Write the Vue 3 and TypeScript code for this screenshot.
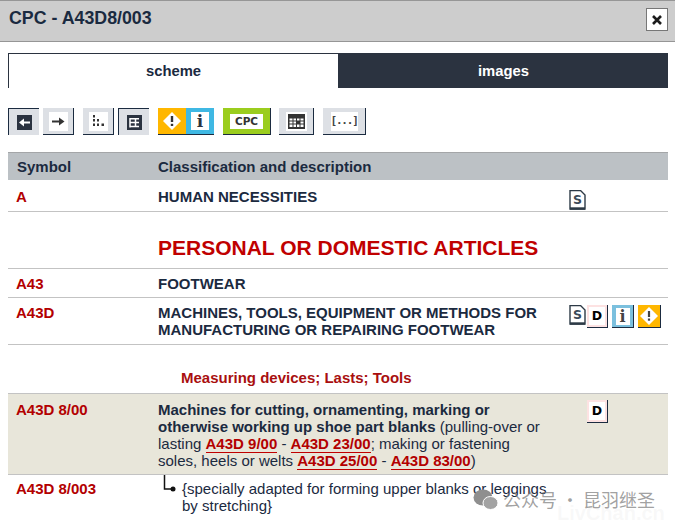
<script setup lang="ts">
const docPath = "M1 0.500h10.500l4.500 4.500v14H1z"
</script>

<template>
  <div class="page">
    <header class="head">
      <h1 class="title">CPC - A43D8/003</h1>
      <button class="close" aria-label="close">
        <svg width="12" height="12" viewBox="0 0 12 12"><path d="M2 2l8 8M10 2l-8 8" stroke="#1c1c1c" stroke-width="2.600" /></svg>
      </button>
    </header>

    <div class="main">
      <nav class="tabs">
        <div class="tab on">scheme</div>
        <div class="tab off">images</div>
      </nav>

      <div class="tools">
        <span class="tb pressed"><span class="ic dark"><svg width="15" height="15" viewBox="0 0 15 15"><path d="M4 7.500h9" stroke="#fff" stroke-width="2" /><path d="M2 7.500l5-4v8z" fill="#fff" /></svg></span></span>
        <span class="tb m4"><span class="ic white"><svg width="15" height="15" viewBox="0 0 15 15"><path d="M1 7.500h9" stroke="#333" stroke-width="2" /><path d="M8 3.500l5.500 4-5.500 4z" fill="#333" /></svg></span></span>
        <span class="tb m9"><span class="ic white"><svg width="15" height="15" viewBox="0 0 15 15"><path d="M2 1h2v2.500H2zM2 5h2v2.500H2zM2 9.500h2V12H2zM6 5h2v2.500H6zM6 9.500h2V12H6zM10.500 9.500h2.500V12h-2.500z" fill="#333" /></svg></span></span>
        <span class="tb pressed m4"><span class="ic dark"><svg width="15" height="15" viewBox="0 0 15 15"><path d="M3 3v9.500M3 3.800h9M3 7.500h9M3 11.500h9M8.500 3.800v7.700" stroke="#fff" stroke-width="1.500" fill="none" /></svg></span></span>
        <span class="duo m9">
          <span class="half amber"><svg width="18" height="18" viewBox="0 0 18 18"><path d="M9 0l9 9-9 9-9-9z" fill="#fff" /><path d="M9 4v6" stroke="#333" stroke-width="2.400" /><path d="M7.800 11.800h2.400v2.200H7.800z" fill="#333" /></svg></span>
          <span class="half blue"><span class="info">i</span></span>
        </span>
        <span class="cpc m9"><span class="cpc-in">CPC</span></span>
        <span class="tb wide m8"><span class="ic white"><svg width="17" height="15" viewBox="0 0 17 15"><path d="M0 0h17v15H0z" fill="#333" /><path d="M1.500 4.500h3v2h-3zM5.500 4.500h2.500v2H5.500zM9 4.500h2.500v2H9zM12.500 4.500h3v2h-3zM1.500 7.500h3v2h-3zM5.500 7.500h2.500v2H5.500zM12.500 7.500h3v2h-3zM1.500 10.500h3v2.500h-3zM5.500 10.500h2.500v2.500H5.500zM9 10.500h2.500v2.500H9zM12.500 10.500h3v2.500h-3z" fill="#fff" /></svg></span></span>
        <span class="tb wide2 m9"><span class="dots">[...]</span></span>
      </div>

      <div class="row thead">
        <div class="sym">Symbol</div>
        <div class="desc">Classification and description</div>
      </div>

      <div class="row r1">
        <div class="sym red">A</div>
        <div class="desc b">HUMAN NECESSITIES</div>
        <div class="acts">
          <span class="doc"><svg width="17" height="20" viewBox="0 0 17 20"><path :d="docPath" fill="#fff" stroke="#2d3a46" stroke-width="1.400" /><path d="M1 18.500h15" stroke="#2d3a46" stroke-width="2.400" /></svg><span class="doc-s">S</span></span>
        </div>
      </div>

      <div class="row r2">
        <div class="big">PERSONAL OR DOMESTIC ARTICLES</div>
      </div>

      <div class="row r3">
        <div class="sym red">A43</div>
        <div class="desc b">FOOTWEAR</div>
      </div>

      <div class="row r4">
        <div class="sym red">A43D</div>
        <div class="desc b">MACHINES, TOOLS, EQUIPMENT OR METHODS FOR MANUFACTURING OR REPAIRING FOOTWEAR</div>
        <div class="acts">
          <span class="doc"><svg width="17" height="20" viewBox="0 0 17 20"><path :d="docPath" fill="#fff" stroke="#2d3a46" stroke-width="1.400" /><path d="M1 18.500h15" stroke="#2d3a46" stroke-width="2.400" /></svg><span class="doc-s">S</span></span>
          <span class="d pink">D</span>
          <span class="mini-i"><span class="info small">i</span></span>
          <span class="mini-w"><svg width="18" height="18" viewBox="0 0 18 18"><path d="M9 0l9 9-9 9-9-9z" fill="#fff" /><path d="M9 4v6" stroke="#444" stroke-width="2.200" /><path d="M7.900 11.500h2.200v2.200H7.900z" fill="#444" /></svg></span>
        </div>
      </div>

      <div class="row r5">
        <div class="subh">Measuring devices; Lasts; Tools</div>
      </div>

      <div class="row r6">
        <div class="sym red">A43D 8/00</div>
        <div class="desc nar">
          <b>Machines for cutting, ornamenting, marking or otherwise working up shoe part blanks</b>
          (pulling-over or lasting <a class="lnk">A43D 9/00</a> - <a class="lnk">A43D 23/00</a>; making or fastening soles, heels or welts <a class="lnk">A43D 25/00</a> - <a class="lnk">A43D 83/00</a>)
        </div>
        <div class="acts center"><span class="d">D</span></div>
      </div>

      <div class="row r7">
        <div class="sym red">A43D 8/003</div>
        <div class="tree">
          <svg class="elbow" width="16" height="18" viewBox="0 0 16 18"><path d="M1.500 0v14h8" stroke="#111" stroke-width="1.500" fill="none" /><circle cx="10" cy="14" r="2.500" fill="#111" /></svg>
          <div class="leaf">{specially adapted for forming upper blanks or leggings by stretching}</div>
        </div>
      </div>
    </div>

    <div class="faint">LivChan.cn</div>
    <div class="mark">
      <svg width="25" height="21" viewBox="0 0 25 21"><ellipse cx="10" cy="8.500" rx="9.500" ry="8" fill="#8f8f8f" /><ellipse cx="17.500" cy="14" rx="7.500" ry="6.500" fill="#a3a3a3" stroke="#fff" stroke-width="1" /></svg>
      <span>公众号 · 昆羽继圣</span>
    </div>
  </div>
</template>

<style>
html, body { margin: 0; background: #fff; }
</style>

<style scoped>
.page {
  position: relative;
  width: 675px;
  height: 526px;
  overflow: hidden;
  background: #fff;
  font-family: "Liberation Sans", Arial, sans-serif;
  font-size: 15px;
  line-height: 17px;
  color: #1b2a3f;
}
.head {
  height: 40px;
  background: #cdcdcd;
  border-top: 1px solid #969696;
  border-bottom: 1px solid #969696;
  display: flex;
  align-items: flex-start;
  justify-content: space-between;
  padding: 0 7px 0 9px;
}
.title {
  margin: 7px 0 0;
  font-size: 17.800px;
  line-height: 20px;
  font-weight: 700;
  color: #1a2a40;
}
.close {
  width: 22px;
  height: 23px;
  margin-top: 7px;
  padding: 0;
  background: #fff;
  border: 1px solid #777;
  display: flex;
  align-items: center;
  justify-content: center;
}
.main { padding: 11px 7px 0 8px; }
.tabs { display: flex; height: 35px; }
.tab {
  flex: 1;
  text-align: center;
  font-weight: 700;
  font-size: 14.800px;
  box-sizing: border-box;
}
.on { background: #fff; border: 1px solid #2b3340; border-bottom: 0; line-height: 35px; }
.off { background: #2b3340; color: #fff; line-height: 37px; }
.tools { display: flex; align-items: flex-start; height: 27px; margin-top: 20px; }
.tb {
  box-sizing: border-box;
  width: 31px;
  height: 27px;
  background: #dde0e5;
  border-right: 1px solid #1b2b40;
  border-bottom: 1px solid #1b2b40;
  display: flex;
  align-items: center;
  justify-content: center;
}
.pressed { border: 0; border-left: 1px solid #1b2b40; border-top: 1px solid #1b2b40; }
.m4 { margin-left: 4px; }
.m8 { margin-left: 8px; }
.m9 { margin-left: 9px; }
.tb.wide { width: 35px; }
.tb.wide2 { width: 43px; }
.ic { width: 15px; height: 15px; display: block; }
.ic svg { display: block; }
.ic.white { background: #fff; outline: 2px solid #fff; }
.wide .ic { width: 17px; }
.ic.dark { background: #2b3340; }
.duo { display: flex; height: 27px; border-bottom: 1px solid #1b2b40; box-sizing: border-box; }
.half { height: 26px; display: flex; align-items: center; justify-content: center; }
.amber { width: 28px; background: #ffb700; }
.blue { width: 28px; background: #3fb8e3; }
.info {
  width: 18px;
  height: 18px;
  background: #fff;
  font-family: "DejaVu Serif", "Liberation Serif", serif;
  font-weight: 700;
  font-size: 17px;
  line-height: 18px;
  text-align: center;
  color: #2b3340;
  display: block;
}
.cpc {
  box-sizing: border-box;
  width: 48px;
  height: 27px;
  background: #9bcd1e;
  border-right: 1px solid #1b2b40;
  border-bottom: 1px solid #1b2b40;
  display: flex;
  align-items: center;
  justify-content: center;
}
.cpc-in {
  width: 33px;
  height: 15px;
  background: #fff;
  color: #333;
  font-family: "DejaVu Sans", sans-serif;
  font-size: 10.500px;
  font-weight: 700;
  line-height: 15px;
  text-align: center;
}
.dots {
  background: #fff;
  width: 27px;
  height: 19px;
  font-family: "DejaVu Sans Mono", monospace;
  font-weight: 700;
  font-size: 11px;
  line-height: 18px;
  letter-spacing: -1.200px;
  text-align: center;
  color: #444;
}
.row { display: flex; box-sizing: border-box; border-bottom: 1px solid #c3c3c3; }
.sym { width: 150px; padding-left: 8px; box-sizing: border-box; flex: none; }
.red { color: #b30000; font-weight: 700; }
.desc { width: 402px; flex: none; box-sizing: border-box; padding-right: 8px; }
.nar { padding-right: 14px; }
.b { font-weight: 700; }
.thead {
  margin-top: 17px;
  height: 28px;
  align-items: center;
  background: #bcc1c5;
  border-top: 1px solid #a4a6a8;
  border-bottom: 0;
  font-weight: 700;
}
.thead .sym { padding-left: 9px; }
.r1 { height: 32px; padding-top: 8px; }
.r2 { height: 57px; align-items: flex-end; padding: 0 0 7px 150px; }
.big { color: #c00000; font-size: 21px; font-weight: 700; line-height: 26px; }
.r3 { height: 29px; padding-top: 6px; }
.r4 { height: 47px; padding-top: 6px; }
.r5 { height: 49px; padding: 24px 0 0 173px; }
.subh { color: #a90f0f; font-weight: 700; }
.r6 { height: 81px; padding-top: 7px; background: #e8e6da; }
.r7 { border-bottom: 0; padding-top: 5px; }
.lnk {
  color: #b30000;
  font-weight: 700;
  border-bottom: 1px solid #c00000;
}
.acts { display: flex; align-items: flex-start; padding-left: 9px; margin-top: 1px; }
.center { padding-left: 27px; margin-top: -1px; }
.r1 .acts { margin-top: 2px; }
.doc { position: relative; width: 17px; height: 20px; display: block; }
.doc svg { display: block; }
.doc-s {
  position: absolute;
  left: 0;
  right: 0;
  top: 2px;
  font-family: "DejaVu Sans", sans-serif;
  font-weight: 700;
  font-size: 12.500px;
  line-height: 16px;
  text-align: center;
  color: #3b4a58;
}
.d {
  box-sizing: border-box;
  width: 21px;
  height: 23px;
  background: #fff;
  box-shadow: inset 0 0 0 2px #fde2e2;
  border-right: 1px solid #1b2b40;
  border-bottom: 1px solid #1b2b40;
  color: #000;
  font-family: "DejaVu Sans", sans-serif;
  font-weight: 700;
  font-size: 12.500px;
  line-height: 22px;
  text-align: center;
}
.pink { margin-left: 1px; }
.mini-i {
  box-sizing: border-box;
  margin-left: 4px;
  width: 22px;
  height: 23px;
  background: #7bc0de;
  border-right: 1px solid #1b2b40;
  border-bottom: 1px solid #1b2b40;
  display: flex;
  align-items: center;
  justify-content: center;
}
.small { width: 14px; height: 17px; line-height: 17px; font-size: 16px; color: #444; }
.mini-w {
  box-sizing: border-box;
  margin-left: 4px;
  width: 23px;
  height: 23px;
  background: #ffb700;
  border-right: 1px solid #1b2b40;
  border-bottom: 1px solid #1b2b40;
  display: flex;
  align-items: center;
  justify-content: center;
}
.tree { display: flex; }
.elbow { flex: none; margin: -5px 4px 0 5px; display: block; }
.leaf { width: 372px; margin-left: -1px; }
.mark {
  position: absolute;
  left: 473px;
  top: 488px;
  display: flex;
  align-items: center;
  gap: 5px;
  color: rgba(120, 120, 120, 0.7);
  font-family: "Noto Sans CJK SC", sans-serif;
  font-size: 18px;
  line-height: 22px;
  white-space: nowrap;
}
.faint {
  position: absolute;
  left: 557px;
  top: 501px;
  color: rgba(200, 200, 200, 0.12);
  font-size: 20px;
  line-height: 24px;
  font-weight: 700;
}
</style>
